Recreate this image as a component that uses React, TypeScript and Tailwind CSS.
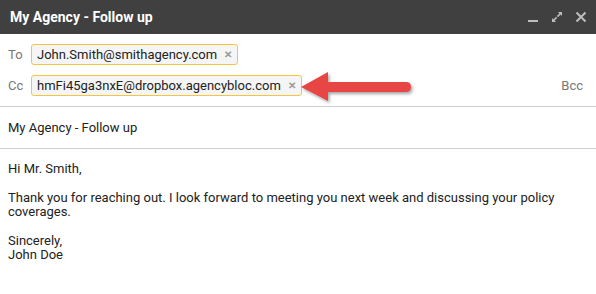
import React from "react";

function Chip({ email }: { email: string }) {
  return (
    <span className="inline-flex h-[21px] items-center rounded-[3px] border border-[#f5c542] bg-[#f5f5f5] pl-[5px] pr-[5px] text-[13px] text-[#222]">
      <span>{email}</span>
      <span className="ml-[7px] text-[10px] font-bold text-[#999]">✕</span>
    </span>
  );
}

function Arrow() {
  return (
    <svg
      className="absolute left-[298px] top-[70px]"
      width="120"
      height="36"
      viewBox="0 0 120 36"
    >
      <defs>
        <filter id="sh" x="-10%" y="-20%" width="130%" height="160%">
          <feDropShadow dx="1.5" dy="2" stdDeviation="1.5" floodColor="#000" floodOpacity="0.35" />
        </filter>
      </defs>
      <g filter="url(#sh)">
        <path d="M3 17 L30 2 L30 12 L108 12 Q113 12 113 17 Q113 22 108 22 L30 22 L30 31 Z" fill="#e84545" />
      </g>
    </svg>
  );
}

export default function App() {
  return (
    <div
      className="relative h-[294px] w-[596px] overflow-hidden bg-white"
      style={{ fontFamily: "Roboto, Arial, sans-serif" }}
    >
      <div className="flex h-[34px] items-center justify-between bg-[#404040] pl-[10px] pr-[9px]">
        <span className="text-[14px] font-bold text-white">My Agency - Follow up</span>
        <div className="flex items-center gap-[12px] text-[#bdbdbd]">
          <svg width="12" height="12" viewBox="0 0 12 12">
            <rect x="1" y="9" width="10" height="2" fill="currentColor" />
          </svg>
          <svg width="12" height="12" viewBox="0 0 12 12">
            <path d="M7 1 H11 V5 L9.6 3.6 L7 6.2 L5.8 5 L8.4 2.4 Z M5 11 H1 V7 L2.4 8.4 L5 5.8 L6.2 7 L3.6 9.6 Z" fill="currentColor" />
          </svg>
          <svg width="12" height="12" viewBox="0 0 12 12">
            <path d="M1.5 1.5 L10.5 10.5 M10.5 1.5 L1.5 10.5" stroke="currentColor" strokeWidth="2" />
          </svg>
        </div>
      </div>

      <div className="flex flex-col gap-[10px] pt-[10px] pb-[10px] pl-[8px] pr-[13px] text-[13px]">
        <div className="flex items-center">
          <span className="w-[23px] text-[#777]">To</span>
          <Chip email="John.Smith@smithagency.com" />
        </div>
        <div className="flex items-center">
          <span className="w-[23px] text-[#777]">Cc</span>
          <Chip email="hmFi45ga3nxE@dropbox.agencybloc.com" />
          <span className="ml-auto text-[#777]">Bcc</span>
        </div>
      </div>

      <div className="border-t border-[#cfcfcf]" />
      <div className="flex h-[41px] items-center px-[8px] text-[13px] text-[#222]">My Agency - Follow up</div>
      <div className="border-t border-[#cfcfcf]" />

      <div className="px-[8px] pt-[13px] text-[13px] leading-[14px] text-[#222]">
        <p>Hi Mr. Smith,</p>
        <p className="mt-[15px]">
          Thank you for reaching out. I look forward to meeting you next week and discussing your policy coverages.
        </p>
        <p className="mt-[15px]">
          Sincerely,
          <br />
          John Doe
        </p>
      </div>

      <Arrow />
    </div>
  );
}
